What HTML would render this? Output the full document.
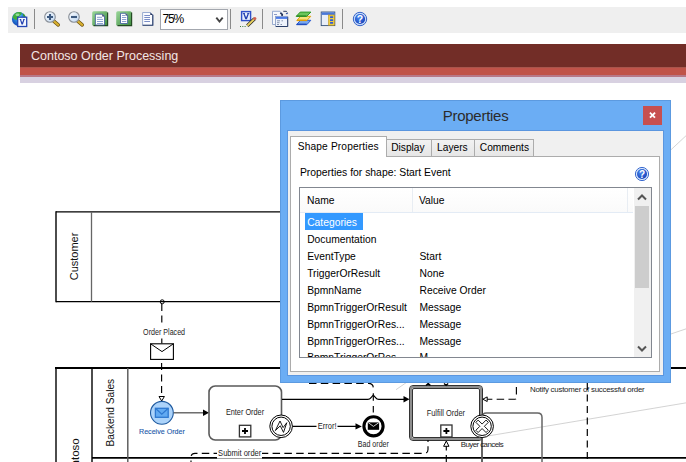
<!DOCTYPE html>
<html><head><meta charset="utf-8">
<style>
html,body{margin:0;padding:0;background:#fff;width:686px;height:462px;overflow:hidden;position:relative;font-family:"Liberation Sans",sans-serif;}
.abs{position:absolute;}
.t{position:absolute;white-space:nowrap;line-height:1;}
#tb{left:8px;top:7px;width:678px;height:26px;background:#efefef;}
.sep{position:absolute;top:2px;width:1px;height:20px;background:#8a8a8a;}
#hdr{left:20px;top:44px;width:666px;height:23px;background:#722d27;}
#band1{left:20px;top:67px;width:666px;height:1px;background:#a8554c;}
#band2{left:20px;top:68px;width:666px;height:7px;background:#c05349;}
#band3{left:20px;top:75px;width:666px;height:2px;background:#b77888;}
#band4{left:20px;top:77px;width:666px;height:6px;background:#d8d1e1;}
svg{position:absolute;left:0;top:0;}
#dlg{left:280px;top:100px;width:391px;height:283px;background:#6badf4;box-sizing:border-box;border:1px solid #5c9ae0;}
#dlgin{position:absolute;left:7px;top:30px;width:375px;height:244px;background:#f0f0f0;box-shadow:0 0 0 1px #5b96df;}
#close{position:absolute;left:362px;top:5px;width:19px;height:19px;background:#c75050;color:#fff;font-weight:bold;font-size:10px;text-align:center;line-height:18px;}
#panel{position:absolute;left:2px;top:25px;width:370px;height:216px;box-sizing:border-box;border:1px solid #acacac;background:#fff;}
.tab{position:absolute;top:7.6px;height:17px;box-sizing:border-box;border:1px solid #acacac;border-bottom:none;background:linear-gradient(#f2f2f2,#e6e6e6);font-size:10.2px;line-height:1;padding-top:3.2px;color:#000;white-space:nowrap;}
.tab.act{top:5.2px;height:21px;background:#fff;padding-top:4.2px;}
#help{position:absolute;left:347.6px;top:36.5px;width:13px;height:13px;border-radius:50%;background:radial-gradient(circle at 45% 35%,#6aa6f0,#1f5fc8 70%);box-shadow:0 0 0 1px #cfdff5;color:#fff;font-weight:bold;font-size:10px;line-height:13px;text-align:center;}
#grid{position:absolute;left:11px;top:56px;width:353px;height:171px;box-sizing:border-box;border:1px solid #828790;background:#fff;overflow:hidden;}
#ghdr{position:absolute;left:0;top:0;width:333px;height:24px;background:linear-gradient(#fff,#fafafa);border-bottom:1px solid #e3ebf5;}
.gdiv{position:absolute;top:0;width:1px;height:24px;background:#e8edf3;}
.gh{top:8px;font-size:10.3px;color:#000;}
#sel{position:absolute;left:5.2px;top:25px;width:57.7px;height:16.8px;background:#3399ff;}
#rows .t{font-size:10.3px;color:#000;}
#sb{position:absolute;left:334px;top:0;width:17px;height:169px;background:#f0f0f0;}
#sbthumb{position:absolute;left:1px;top:18px;width:14px;height:82px;background:#cdcdcd;}
.chev{position:absolute;left:3px;}
</style></head>
<body>
<div id="tb" class="abs"></div>
<div class="abs" style="left:160px;top:9px;width:68px;height:21px;box-sizing:border-box;border:1px solid #a3a7ae;background:#fff"></div>
<div class="t" style="left:162.6px;top:12.7px;font-size:12px;letter-spacing:-1.2px;color:#000">75%</div>
<svg width="686" height="40" viewBox="0 0 686 40" style="position:absolute;left:0;top:0">
  <defs>
    <radialGradient id="globe" cx="0.5" cy="0.35" r="0.7"><stop offset="0" stop-color="#7fd8ff"/><stop offset="0.4" stop-color="#2a8ae0"/><stop offset="1" stop-color="#123fae"/></radialGradient>
    <linearGradient id="grn" x1="0" y1="0" x2="1" y2="1"><stop offset="0" stop-color="#9ad69a"/><stop offset="1" stop-color="#3d8c3d"/></linearGradient>
    <linearGradient id="lens" x1="0" y1="0" x2="1" y2="1"><stop offset="0" stop-color="#ffffff"/><stop offset="1" stop-color="#bcd6f2"/></linearGradient>
    <radialGradient id="hlp" cx="0.4" cy="0.35" r="0.7"><stop offset="0" stop-color="#4a8af0"/><stop offset="1" stop-color="#163fb8"/></radialGradient>
  </defs>
  <g stroke="#8a8a8a" stroke-width="1">
    <line x1="34.5" y1="9" x2="34.5" y2="29"/>
    <line x1="230.5" y1="9" x2="230.5" y2="29"/>
    <line x1="262.5" y1="9" x2="262.5" y2="29"/>
    <line x1="342.5" y1="9" x2="342.5" y2="29"/>
  </g>
  <!-- globe -->
  <circle cx="18.9" cy="19" r="7" fill="url(#globe)"/>
  <path d="M12.6,17.5 Q13.5,13.5 17,12.3 Q20.5,11.6 22,13 Q21.5,15 19.5,16 Q18.5,18.5 16.5,20 Q14,19.5 12.6,17.5z" fill="#3fae3a"/>
  <path d="M22.8,13.2 Q25,14.3 25.8,17 L23.8,16.8 Q22.5,15.2 22.8,13.2z" fill="#3a9a32"/>
  <ellipse cx="17.5" cy="14.8" rx="2" ry="1.3" fill="#b8f0c0" opacity="0.7"/>
  <rect x="17.7" y="17.2" width="9" height="9.3" fill="#f4f7ff" stroke="#2446b4" stroke-width="1.3"/>
  <path d="M19.4,18.9 L21.4,18.9 L21.4,19.6 L21,19.6 L22.2,22.6 L23.4,19.6 L23,19.6 L23,18.9 L25,18.9 L25,19.6 L24.5,19.6 L22.9,24.6 L21.5,24.6 L19.9,19.6 L19.4,19.6 z" fill="#2240b0"/>
  <!-- zoom in -->
  <line x1="53.8" y1="21.2" x2="58.2" y2="24.8" stroke="#6a5010" stroke-width="3.6" stroke-linecap="round"/>
  <line x1="53.8" y1="21.2" x2="58.2" y2="24.8" stroke="#d8b030" stroke-width="2.2" stroke-linecap="round"/>
  <circle cx="50" cy="17" r="5.3" fill="url(#lens)" stroke="#8a9098" stroke-width="1.1"/>
  <path d="M47,17 L53,17 M50,14 L50,20" stroke="#3d5a80" stroke-width="2.1"/>
  <!-- zoom out -->
  <line x1="77.8" y1="21.2" x2="82.2" y2="24.8" stroke="#6a5010" stroke-width="3.6" stroke-linecap="round"/>
  <line x1="77.8" y1="21.2" x2="82.2" y2="24.8" stroke="#d8b030" stroke-width="2.2" stroke-linecap="round"/>
  <circle cx="74" cy="17" r="5.3" fill="url(#lens)" stroke="#8a9098" stroke-width="1.1"/>
  <path d="M71,17 L77,17" stroke="#3d5a80" stroke-width="2.1"/>
  <!-- green page 1 -->
  <rect x="92.2" y="11.2" width="15.4" height="14.5" rx="1.5" fill="url(#grn)"/>
  <path d="M107.6,12.5 L107.6,25.7 L93.5,25.7" stroke="#244a24" stroke-width="1.2" fill="none"/>
  <path d="M95.4,14.2 L102.5,14.2 L104.5,16.2 L104.5,25 L95.4,25 z" fill="#fff" stroke="#4a66a0" stroke-width="0.9"/>
  <path d="M97,17.3 L102,17.3 M97,19.4 L103,19.4 M97,21.5 L103,21.5 M97,23.5 L103,23.5" stroke="#7d95cc" stroke-width="0.9"/><path d="M102.3,14.3 L104.6,16.6 L102.3,16.6 z" fill="#1e2e58"/>
  <!-- green page 2 -->
  <rect x="116.2" y="11.2" width="15.4" height="14.5" rx="1.5" fill="url(#grn)"/>
  <path d="M131.6,12.5 L131.6,25.7 L117.5,25.7" stroke="#244a24" stroke-width="1.2" fill="none"/>
  <path d="M120.5,13.3 L125.8,13.3 L127.6,15.1 L127.6,23.5 L120.5,23.5 z" fill="#fff" stroke="#4a66a0" stroke-width="0.9"/>
  <path d="M122,15.5 L125.3,15.5 M122,17.5 L126.3,17.5 M122,19.5 L126.3,19.5 M122,21.5 L126.3,21.5" stroke="#7d95cc" stroke-width="0.9"/><path d="M125.6,13.4 L127.7,15.4 L125.6,15.4 z" fill="#1e2e58"/>
  <!-- page -->
  <path d="M142.6,12.5 L150.5,12.5 L152.8,14.8 L152.8,25.3 L142.6,25.3 z" fill="#fbfcff" stroke="#8fa4cc" stroke-width="0.9"/>
  <path d="M152.8,14.8 L152.8,25.3 L142.6,25.3" stroke="#2a3e68" stroke-width="1.1" fill="none"/>
  <path d="M144.3,15.5 L150,15.5 M144.3,17.5 L150,17.5 M144.3,19.5 L150,19.5 M144.3,21.5 L150,21.5" stroke="#6a80c0" stroke-width="0.9"/><path d="M150.3,12.6 L152.8,15.1 L150.3,15.1 z" fill="#1e2e58"/>
  <!-- dropdown chevron -->
  <path d="M216.3,17.7 L219.5,21.5 L222.7,17.7" stroke="#444" stroke-width="1.9" fill="none"/>
  <!-- visio edit -->
  <rect x="241.6" y="11.6" width="9" height="9" fill="#e6eefc" stroke="#2f50c8" stroke-width="1.4"/>
  <path d="M242.8,13 L245,13 L245,13.8 L244.6,13.8 L246.1,17.3 L247.6,13.8 L247.2,13.8 L247.2,13 L249.4,13 L249.4,13.8 L248.9,13.8 L246.9,19.2 L245.3,19.2 L243.3,13.8 L242.8,13.8 z" fill="#2240b0"/>
  <line x1="247.3" y1="25.8" x2="254.6" y2="18.8" stroke="#222" stroke-width="3.3"/>
  <line x1="247.3" y1="25.8" x2="254.6" y2="18.8" stroke="#e8d060" stroke-width="1.9"/>
  <circle cx="254.8" cy="18.5" r="1.6" fill="#d06050"/>
  <path d="M240,26.5 h1 M242.3,26.5 h1 M244.6,26.5 h1" stroke="#3a7a3a" stroke-width="1.1"/>
  <!-- report icon -->
  <path d="M272.5,11.3 L280,11.3 L282.5,13.8 L282.5,24.5 L272.5,24.5 z" fill="#f6f8fc" stroke="#8fa4cc" stroke-width="0.9"/>
  <path d="M274,14.5 L277,14.5" stroke="#8090c0" stroke-width="0.9"/>
  <path d="M280.3,12.8 L282.3,14.8 L281.8,16.2" stroke="#1a2a50" stroke-width="1.5" fill="none"/>
  <path d="M283.3,11.3 L286.3,11.3 L287.3,12.5" stroke="#1a2a50" stroke-width="0.9" fill="none"/><path d="M285.6,13 L288.2,13 L286.9,14.6 z" fill="#2a4a9a"/>
  <rect x="275.5" y="16.4" width="12.2" height="10.1" fill="#eef3fc" stroke="#8fa0c4" stroke-width="0.9"/><path d="M287.7,17 L287.7,26.5 L276,26.5" stroke="#2a3e68" stroke-width="1" fill="none"/>
  <rect x="276" y="16.8" width="11.3" height="2.1" fill="#4a7ae8"/>
  <path d="M277,20.8 L280,20.8 M281.5,20.8 L283,20.8 M277,22.7 L279.5,22.7 M277,24.5 L279,24.5 M280.5,24.5 L282,24.5" stroke="#7a8aa8" stroke-width="0.9"/>
  <!-- layers -->
  <path d="M300.5,20.3 L310.8,20.3 L306.8,24.7 L296.5,24.7 z" fill="#78a8f2" stroke="#2a5ad0" stroke-width="1"/>
  <path d="M296.8,24.2 L306.6,24.2" stroke="#1d48b8" stroke-width="1.2"/>
  <path d="M300.5,16.3 L310.8,16.3 L306.8,20.6 L296.8,20.6 z" fill="#f6e27a" stroke="#e0a010" stroke-width="1"/>
  <path d="M297,20.2 L306.6,20.2" stroke="#e09a00" stroke-width="1.3"/>
  <path d="M300.2,12.1 L310.9,12.1 L306.6,16.4 L296.2,16.4 z" fill="#6cc45a" stroke="#2f9a2a" stroke-width="1"/>
  <path d="M296.5,16 L306.4,16" stroke="#2a8a22" stroke-width="1.2"/>
  <!-- panel icon -->
  <rect x="321.2" y="12" width="13.6" height="13.6" fill="#e8eef8" stroke="#34507a" stroke-width="0.9"/>
  <rect x="321.6" y="12.4" width="12.8" height="2.5" fill="#4a78d8"/>
  <rect x="328.6" y="15" width="5.8" height="10.2" fill="#f0d040" stroke="#c09010" stroke-width="0.6"/>
  <rect x="330" y="16.3" width="3.2" height="1.8" rx="0.5" fill="#2f5ad8"/>
  <rect x="330" y="19.2" width="3.2" height="1.8" rx="0.5" fill="#2f5ad8"/>
  <rect x="330" y="22" width="3.2" height="1.8" rx="0.5" fill="#2f5ad8"/>
  <!-- help -->
  <circle cx="360" cy="19" r="6.7" fill="#c8dcf8" stroke="#3462c8" stroke-width="1"/>
  <circle cx="360" cy="19" r="5.1" fill="url(#hlp)"/>
  <text x="360" y="23" text-anchor="middle" font-family="Liberation Sans" font-weight="bold" font-size="10.5" fill="#fff">?</text>
</svg>
<div id="hdr" class="abs"></div>
<div id="band1" class="abs"></div>
<div id="band2" class="abs"></div>
<div id="band3" class="abs"></div>
<div id="band4" class="abs"></div>
<div class="t" style="left:31px;top:49.7px;font-size:12.5px;color:#f3e6e4">Contoso Order Processing</div>

<svg width="686" height="462" viewBox="0 0 686 462" font-family="Liberation Sans" fill="none">
  <defs>
    <marker id="af" viewBox="0 0 10 10" refX="10" refY="5" markerWidth="6" markerHeight="6" orient="auto"><path d="M0,1 L10,5 L0,9 z" fill="#000"/></marker>
  </defs>
  <!-- thin gray diagonal lines -->
  <g stroke="#c8c8c8" stroke-width="0.8">
    <line x1="486" y1="436.3" x2="690" y2="402.2"/>
    <line x1="660" y1="337.7" x2="690" y2="327.5"/>
    <line x1="660" y1="160" x2="690" y2="132"/>
    <line x1="396" y1="389.7" x2="410" y2="380"/>
  </g>
  <!-- customer pool -->
  <g stroke="#000" stroke-width="1.4">
    <line x1="56" y1="211.9" x2="650" y2="211.9"/>
    <line x1="56" y1="301.6" x2="650" y2="301.6"/>
    <line x1="56" y1="211.2" x2="56" y2="302.3"/>
  </g>
  <line x1="91.5" y1="211.9" x2="91.5" y2="301.6" stroke="#666" stroke-width="1.3"/>
  <text x="0" y="0" transform="translate(77.7,232.7) rotate(-90)" text-anchor="end" font-size="11.2" textLength="47.5" lengthAdjust="spacingAndGlyphs" fill="#111">Customer</text>

  <!-- message flow -->
  <circle cx="162.2" cy="301.8" r="2" stroke="#000" stroke-width="1"/>
  <path d="M161.8,304 L161.8,343.5" stroke="#000" stroke-width="1.15" stroke-dasharray="7,4.5"/>
  <rect x="140" y="327" width="48" height="9" fill="#fff"/>
  <text x="143.1" y="334.8" font-size="8.3" textLength="42" lengthAdjust="spacingAndGlyphs" fill="#1c1c1c">Order Placed</text>
  <rect x="150.6" y="343.8" width="22.8" height="15.6" stroke="#000" stroke-width="1.1" fill="#fff"/>
  <path d="M150.6,343.8 L162,351.6 L173.4,343.8" stroke="#000" stroke-width="1"/>
  <path d="M161.6,360 L161.6,396.5" stroke="#000" stroke-width="1.15" stroke-dasharray="7,4.5" stroke-dashoffset="-3"/>
  <path d="M159,396.5 L164.4,396.5 L161.7,401 z" stroke="#000" stroke-width="1" fill="#fff"/>

  <!-- contoso pool -->
  <g stroke="#000">
    <line x1="55" y1="368" x2="686" y2="368" stroke-width="2"/>
    <line x1="56" y1="368" x2="56" y2="462" stroke-width="1.4"/>
    <line x1="92" y1="368" x2="92" y2="462" stroke-width="1.4"/>
    <line x1="92" y1="457.9" x2="686" y2="457.9" stroke-width="1.6"/>
  </g>
  <line x1="127.8" y1="368" x2="127.8" y2="462" stroke="#555" stroke-width="1.4"/>
  <text transform="translate(79.4,438.3) rotate(-90)" text-anchor="end" font-size="11.5" fill="#111">Contoso</text>
  <text transform="translate(113.7,378.9) rotate(-90)" text-anchor="end" font-size="11.2" textLength="67.6" lengthAdjust="spacingAndGlyphs" fill="#111">Backend Sales</text>

  <!-- receive order start event -->
  <circle cx="161.9" cy="412.8" r="11.4" fill="#acd3fa" stroke="#1e5aa0" stroke-width="1.1"/>
  <rect x="155.4" y="408.3" width="12.8" height="9" fill="#62aaf2" stroke="#2e78d0" stroke-width="1.3"/>
  <path d="M155.4,408.3 L161.8,414.2 L168.2,408.3" stroke="#2e78d0" stroke-width="1.2"/>
  <text x="139" y="434" font-size="8.1" textLength="45.8" lengthAdjust="spacingAndGlyphs" fill="#2259aa" stroke="#2259aa" stroke-width="0.12">Receive Order</text>
  <line x1="173.5" y1="412.8" x2="203.5" y2="412.8" stroke="#555" stroke-width="1.3"/>
  <path d="M203,409.6 L209,412.8 L203,416 z" fill="#000"/>

  <!-- enter order -->
  <rect x="209" y="386" width="72.5" height="54" rx="6.2" stroke="#5a5a5a" stroke-width="1.6" fill="#fff"/>
  <text x="225.9" y="415.4" font-size="8.3" textLength="38.2" lengthAdjust="spacingAndGlyphs" fill="#1c1c1c">Enter Order</text>
  <rect x="239.4" y="425.3" width="11.4" height="11.6" stroke="#333" stroke-width="1.3" fill="#fff"/>
  <path d="M242,431 L248,431 M245,428 L245,434" stroke="#000" stroke-width="1.8"/>

  <!-- line enter->fulfill with hop -->
  <path d="M282,399.3 L367.8,399.3 Q369.8,399.3 370.8,397.8 L373.3,395.2 L375.8,397.8 Q376.8,399.3 378.8,399.3 L404,399.3" stroke="#000" stroke-width="1.2"/>
  <path d="M403.5,396.1 L409.5,399.3 L403.5,402.5 z" fill="#000"/>

  <!-- error boundary -->
  <circle cx="281.1" cy="426.3" r="11.3" fill="#fff" stroke="#000" stroke-width="1"/>
  <circle cx="281.1" cy="426.3" r="9.2" stroke="#000" stroke-width="1"/>
  <path d="M275.4,430.5 L280,421 L283.1,427.6 L286.8,422.7 L283.5,432.4 L280.3,425.8 z" stroke="#000" stroke-width="0.9" stroke-linejoin="miter"/>
  <line x1="292.5" y1="426.4" x2="356" y2="426.4" stroke="#000" stroke-width="1.2"/>
  <path d="M355.5,423.2 L361.8,426.4 L355.5,429.6 z" fill="#000"/>
  <rect x="316.5" y="421.5" width="21" height="9" fill="#fff"/>
  <text x="317.7" y="429" font-size="8.3" textLength="18.8" lengthAdjust="spacingAndGlyphs" fill="#1c1c1c">Error!</text>

  <!-- dashed top from dialog to bad order -->
  <path d="M309,383.3 L368.5,383.3 Q373.3,383.3 373.3,388 L373.3,390.5 M373.3,393.2 L373.3,401.9 M373.3,406 L373.3,412.5" stroke="#000" stroke-width="1.15" stroke-dasharray="7.5,4.3"/>
  <!-- bad order end event -->
  <circle cx="373.5" cy="426.3" r="9.6" fill="#fff" stroke="#000" stroke-width="3.1"/>
  <rect x="367.8" y="422.4" width="11.3" height="7.4" fill="#000"/>
  <path d="M368.2,422.6 L373.45,426.4 L378.9,422.6" stroke="#fff" stroke-width="0.8"/>
  <text x="357.8" y="446.9" font-size="8.3" textLength="31.1" lengthAdjust="spacingAndGlyphs" fill="#1c1c1c">Bad order</text>

  <!-- fulfill order (transaction) -->
  <rect x="411" y="387" width="70" height="52" rx="2.5" stroke="#8e8e8e" stroke-width="2" fill="#fff"/>
  <rect x="409.5" y="385.5" width="73" height="55" rx="3.5" stroke="#333" stroke-width="1"/>
  <rect x="412.5" y="388.5" width="67" height="49" rx="1.5" stroke="#333" stroke-width="1"/>
  <text x="426.7" y="415.6" font-size="8.3" textLength="38.3" lengthAdjust="spacingAndGlyphs" fill="#1c1c1c">Fulfill Order</text>
  <rect x="440.8" y="425" width="11.2" height="12" stroke="#333" stroke-width="1.3" fill="#fff"/>
  <path d="M443.4,431 L449.4,431 M446.4,428 L446.4,434" stroke="#000" stroke-width="1.8"/>
  <path d="M426,385.5 L428.2,383.3 L430.4,385.5" stroke="#000" stroke-width="1.3"/>
  <path d="M444,383.5 L446.1,385.3 L448.2,383.5" stroke="#000" stroke-width="1.3"/>

  <!-- other task right -->
  <path d="M482,462 L482,417.5 Q482,413 486.5,413 L537.5,413 Q542,413 542,417.5 L542,462" stroke="#666" stroke-width="1.5"/>
  <!-- cancel boundary -->
  <line x1="482" y1="438" x2="482" y2="462" stroke="#555" stroke-width="1.4"/>
  <circle cx="482.1" cy="426.3" r="11.3" fill="#fff" stroke="#000" stroke-width="1"/>
  <circle cx="482.1" cy="426.3" r="9.2" stroke="#000" stroke-width="1"/>
  <path d="M486.06,420.08 L488.32,422.34 L484.36,426.30 L488.32,430.26 L486.06,432.52 L482.10,428.56 L478.14,432.52 L475.88,430.26 L479.84,426.30 L475.88,422.34 L478.14,420.08 L482.10,424.04 z" stroke="#000" stroke-width="0.9" stroke-linejoin="miter"/>
  <text x="460.7" y="447.1" font-size="7.9" textLength="43" lengthAdjust="spacing" fill="#1c1c1c">Buyer cancels</text>

  <!-- dashed return arrow -->
  <path d="M516.4,383 L516.4,397.7 Q516.4,399.2 515,399.2 L487,399.2" stroke="#000" stroke-width="1.15" stroke-dasharray="7.5,4.3" stroke-dashoffset="7.8"/>
  <path d="M487.2,396.9 L482.8,399.2 L487.2,401.5 z" stroke="#000" stroke-width="1" fill="#fff"/>
  <text x="530" y="391.6" font-size="7.9" textLength="114.7" lengthAdjust="spacing" fill="#1c1c1c">Notify customer of successful order</text>
  <path d="M587.3,383 L587.3,462" stroke="#000" stroke-width="1.2" stroke-dasharray="7,4.5"/>

  <!-- bottom dashed submit order -->
  <path d="M191,462 L191,457.4 Q191,453.4 195,453.4 L424,453.4 Q428,453.4 428,449.4 L428,440" stroke="#000" stroke-width="1.15" stroke-dasharray="7.5,4.3" stroke-dashoffset="5.9"/>
  <rect x="217" y="449" width="45" height="9.5" fill="#fff"/>
  <text x="218.1" y="456.1" font-size="8.3" textLength="43.2" lengthAdjust="spacingAndGlyphs" fill="#1c1c1c">Submit order</text>
  <path d="M446.3,462 L446.3,446" stroke="#000" stroke-width="1.15" stroke-dasharray="7,4.5"/>
  <path d="M443.6,446.3 L449,446.3 L446.3,441 z" stroke="#000" stroke-width="1" fill="#fff"/>
</svg>

<div id="dlg" class="abs">
  <div class="t" style="left:161.8px;top:7.1px;font-size:15px;letter-spacing:-0.28px;color:#2b2b2b">Properties</div>
  <div id="close"><svg width="19" height="19" viewBox="0 0 19 19" style="position:absolute;left:0;top:0"><path d="M7.6,7.3 L11.4,11.1 M11.4,7.3 L7.6,11.1" stroke="#fff" stroke-width="1.8" stroke-linecap="square"/></svg></div>
  <div id="dlgin">
    <div id="panel"></div>
    <div class="tab" style="left:97.8px;width:45.8px;padding-left:4.4px">Display</div>
    <div class="tab" style="left:142.6px;width:44px;padding-left:5.5px">Layers</div>
    <div class="tab" style="left:185.7px;width:60px;padding-left:5.1px">Comments</div>
    <div class="tab act" style="left:2px;width:96.5px;padding-left:6.7px;padding-top:4.7px;letter-spacing:0.15px">Shape Properties</div>
    <div class="t" style="left:11.9px;top:37.2px;font-size:10.4px;color:#000">Properties for shape: Start Event</div>
    <svg style="position:absolute;left:346px;top:35px" width="16" height="16" viewBox="0 0 16 16"><circle cx="8" cy="8" r="6.6" fill="#d6e6fb" stroke="#3a6ad0" stroke-width="1"/><circle cx="8" cy="8" r="5" fill="url(#hlp)"/><text x="8" y="11.6" text-anchor="middle" font-family="Liberation Sans" font-weight="bold" font-size="10" fill="#fff">?</text></svg>
    <div id="grid">
      <div id="ghdr"></div>
      <div class="gdiv" style="left:112px"></div>
      <div class="gdiv" style="left:327px"></div>
      <div class="t gh" style="left:7px">Name</div>
      <div class="t gh" style="left:119px">Value</div>
      <div id="sel"></div>
      <div id="rows"><div class="t" style="left:7.2px;top:30.2px;color:#fff">Categories</div><div class="t" style="left:7.2px;top:47.1px;color:#000">Documentation</div><div class="t" style="left:7.2px;top:64.0px;color:#000">EventType</div><div class="t" style="left:119.5px;top:64.0px">Start</div><div class="t" style="left:7.2px;top:80.9px;color:#000">TriggerOrResult</div><div class="t" style="left:119.5px;top:80.9px">None</div><div class="t" style="left:7.2px;top:97.8px;color:#000">BpmnName</div><div class="t" style="left:119.5px;top:97.8px">Receive Order</div><div class="t" style="left:7.2px;top:114.7px;color:#000">BpmnTriggerOrResult</div><div class="t" style="left:119.5px;top:114.7px">Message</div><div class="t" style="left:7.2px;top:131.6px;color:#000">BpmnTriggerOrRes...</div><div class="t" style="left:119.5px;top:131.6px">Message</div><div class="t" style="left:7.2px;top:148.5px;color:#000">BpmnTriggerOrRes...</div><div class="t" style="left:119.5px;top:148.5px">Message</div><div class="t" style="left:7.2px;top:165.4px;color:#000">BpmnTriggerOrRes...</div><div class="t" style="left:119.5px;top:165.4px">M...</div></div>
      <div id="sb">
        <div id="sbthumb"></div>
        <svg class="chev" style="top:6px" width="10" height="7" viewBox="0 0 10 7"><path d="M1,5.5 L5,1.5 L9,5.5" stroke="#555" stroke-width="2" fill="none"/></svg>
        <svg class="chev" style="top:157px" width="10" height="7" viewBox="0 0 10 7"><path d="M1,1.5 L5,5.5 L9,1.5" stroke="#555" stroke-width="2" fill="none"/></svg>
      </div>
    </div>
  </div>
</div>
</body></html>
